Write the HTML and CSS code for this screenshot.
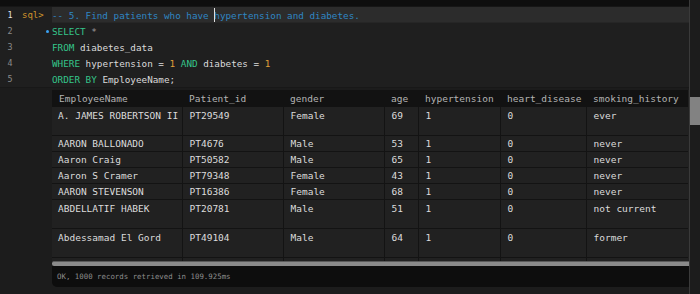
FILE: index.html
```html
<!DOCTYPE html>
<html lang="en-US">
<head>
    <meta charset="UTF-8">
    <title>SQL Console</title>
    <link rel="stylesheet" href="styles.css">
</head>
<body>

<div class="app">
    <div class="main">
        <div class="topstrip"></div>

        <div class="editor">
            <div class="line current">
                <span class="num">1</span>
                <span class="prompt">sql&gt;</span>
                <span class="code"><span class="comment">-- 5. Find patients who have </span><span class="cursor"></span><span class="comment">hypertension and diabetes.</span></span>
            </div>
            <div class="line">
                <span class="num">2</span>
                <span class="prompt"><span class="dot"></span></span>
                <span class="code"><span class="kw">SELECT</span> <span class="op">*</span></span>
            </div>
            <div class="line">
                <span class="num">3</span>
                <span class="prompt"></span>
                <span class="code"><span class="kw">FROM</span> diabetes_data</span>
            </div>
            <div class="line">
                <span class="num">4</span>
                <span class="prompt"></span>
                <span class="code"><span class="kw">WHERE</span> hypertension = <span class="number">1</span> <span class="kw">AND</span> diabetes = <span class="number">1</span></span>
            </div>
            <div class="line">
                <span class="num">5</span>
                <span class="prompt"></span>
                <span class="code"><span class="kw">ORDER BY</span> EmployeeName;</span>
            </div>
        </div>

        <div class="results">
            <div class="grid-wrap">
                <table class="grid">
                    <colgroup>
                        <col style="width:130px">
                        <col style="width:101px">
                        <col style="width:101px">
                        <col style="width:34px">
                        <col style="width:82px">
                        <col style="width:86px">
                        <col style="width:102px">
                    </colgroup>
                    <thead>
                        <tr>
                            <th>EmployeeName</th>
                            <th>Patient_id</th>
                            <th>gender</th>
                            <th>age</th>
                            <th>hypertension</th>
                            <th>heart_disease</th>
                            <th>smoking_history</th>
                        </tr>
                    </thead>
                    <tbody>
                        <tr class="tall">
                            <td>A. JAMES ROBERTSON II</td><td>PT29549</td><td>Female</td><td>69</td><td>1</td><td>0</td><td>ever</td>
                        </tr>
                        <tr>
                            <td>AARON BALLONADO</td><td>PT4676</td><td>Male</td><td>53</td><td>1</td><td>0</td><td>never</td>
                        </tr>
                        <tr>
                            <td>Aaron Craig</td><td>PT50582</td><td>Male</td><td>65</td><td>1</td><td>0</td><td>never</td>
                        </tr>
                        <tr>
                            <td>Aaron S Cramer</td><td>PT79348</td><td>Female</td><td>43</td><td>1</td><td>0</td><td>never</td>
                        </tr>
                        <tr>
                            <td>AARON STEVENSON</td><td>PT16386</td><td>Female</td><td>68</td><td>1</td><td>0</td><td>never</td>
                        </tr>
                        <tr class="tall">
                            <td>ABDELLATIF HABEK</td><td>PT20781</td><td>Male</td><td>51</td><td>1</td><td>0</td><td>not current</td>
                        </tr>
                        <tr class="tall">
                            <td>Abdessamad El Gord</td><td>PT49104</td><td>Male</td><td>64</td><td>1</td><td>0</td><td>former</td>
                        </tr>
                        <tr>
                            <td></td><td></td><td></td><td></td><td></td><td></td><td></td>
                        </tr>
                    </tbody>
                </table>
            </div>
            <div class="hscroll"></div>
            <div class="status">OK, 1000 records retrieved in 109.925ms</div>
        </div>
    </div>

    <div class="vscroll">
        <div class="thumb"></div>
    </div>
</div>

</body>
</html>
```

FILE: styles.css
```css
html, body {
    margin: 0;
    padding: 0;
    height: 100%;
    background-color: #1c1c1c;
    overflow: hidden;
}
body {
    font-family: "DejaVu Sans Mono", "Liberation Mono", monospace;
    color: #d6d6d6;
}
.app {
    display: flex;
    height: 294px;
}
.main {
    flex: 1;
    display: flex;
    flex-direction: column;
}
.topstrip {
    height: 7px;
    background-color: #0e0e0e;
    border-bottom: 1px solid #161616;
    box-sizing: border-box;
}
.editor {
    background-color: #1f1f1f;
    border-bottom: 1px solid #181818;
}
.line {
    display: flex;
    height: 16px;
    line-height: 17px;
    font-size: 9.3px;
    white-space: pre;
}
.num {
    width: 20px;
    text-align: center;
    font-size: 8.4px;
    color: #8a8a8a;
}
.line.current .num {
    color: #e6e6e6;
}
.prompt {
    width: 32px;
    padding-left: 2px;
    box-sizing: border-box;
    color: #d1952c;
    font-size: 9px;
    position: relative;
}
.dot {
    position: absolute;
    right: 3px;
    top: 7px;
    width: 3px;
    height: 3px;
    border-radius: 50%;
    background-color: #3aa2f5;
}
.code {
    flex: 1;
    color: #dadada;
}
.line.current .code {
    background-color: #2c2c2c;
    border-bottom: 1px solid #262626;
}
.comment {
    color: #2f86c3;
}
.cursor {
    display: inline-block;
    width: 1px;
    height: 14px;
    margin-right: -1px;
    vertical-align: -3px;
    background-color: #e0e0e0;
}
.kw {
    color: #35c58a;
}
.op {
    color: #9a9a9a;
}
.number {
    color: #e0a13a;
}

/* results panel */
.results {
    margin: 2px 0 0 52px;
    display: flex;
    flex-direction: column;
    border-radius: 0 0 0 5px;
    overflow: hidden;
}
.grid-wrap {
    height: 171px;
    overflow: hidden;
    background-color: #212121;
}
.grid {
    border-collapse: collapse;
    table-layout: fixed;
    width: 636px;
    font-size: 9.5px;
}
.grid th {
    height: 17px;
    padding: 0 7px;
    background-color: #121212;
    color: #b4b4b4;
    font-weight: normal;
    text-align: left;
    white-space: nowrap;
}
.grid td {
    height: 15px;
    line-height: 15px;
    padding: 0 7px;
    color: #dcdcdc;
    border-bottom: 1px solid #131313;
    border-right: 1px solid #131313;
    vertical-align: top;
    white-space: nowrap;
    overflow: hidden;
}
.grid td:first-child {
    padding-left: 6px;
}
.grid td:last-child {
    border-right: none;
}
.grid tr.tall td {
    height: 27px;
    padding-top: 1px;
}
.hscroll {
    height: 5px;
    background-color: #8a8a8a;
    border-top: 1px solid #5a5a5a;
    border-radius: 2px 0 0 2px;
    box-sizing: border-box;
}
.status {
    height: 21px;
    line-height: 21px;
    padding-left: 5px;
    background-color: #0d0d0d;
    color: #8c8c8c;
    font-size: 7.4px;
}

/* vertical scrollbar */
.vscroll {
    width: 11px;
    border-left: 1px solid #3a3a3a;
    background-color: #1c1c1c;
    box-sizing: border-box;
    padding-top: 97px;
}
.thumb {
    height: 28px;
    background-color: #828282;
}
```
